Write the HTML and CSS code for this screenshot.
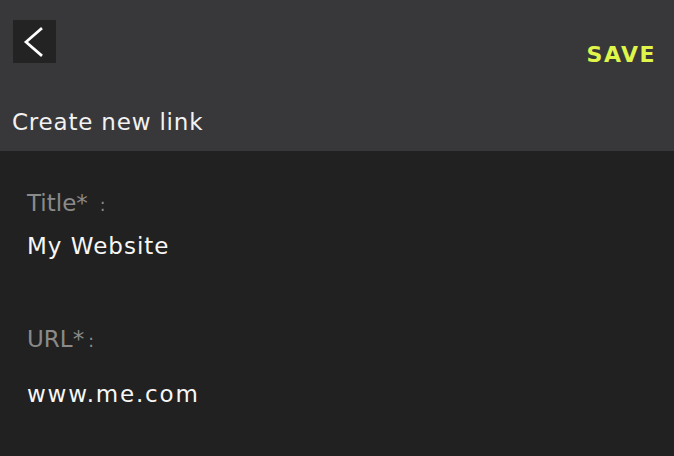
FILE: index.html
```html
<!DOCTYPE html>
<html lang="en">
<head>
<meta charset="utf-8">
<title>Create new link</title>
<link rel="stylesheet" href="styles.css">
</head>
<body>
<div class="app">
  <header class="header">
    <div class="topbar">
      <button class="back" aria-label="Back">
        <svg width="43" height="43" viewBox="0 0 43 43"><path d="M28 9 L13 22 L28 35" fill="none" stroke="#fff" stroke-width="2.7" stroke-linecap="square" stroke-linejoin="miter"/></svg>
      </button>
      <button class="save">SAVE</button>
    </div>
    <h1 class="title">Create new link</h1>
  </header>
  <main class="form">
    <div class="field">
      <div class="label">Title*<span class="colon colon-title">:</span></div>
      <div class="value">My Website</div>
    </div>
    <div class="field field-url">
      <div class="label">URL*<span class="colon">:</span></div>
      <div class="value value-url">www.me.com</div>
    </div>
  </main>
</div>
</body>
</html>
```

FILE: styles.css
```css
* { box-sizing: border-box; }
html, body { margin: 0; padding: 0; }
body {
  width: 674px;
  height: 456px;
  overflow: hidden;
  background: #212121;
  font-family: "DejaVu Sans", "Noto Sans", sans-serif;
}
.app { display: flex; flex-direction: column; height: 100%; }
.header {
  background: #38383a;
  height: 151px;
  padding: 20px 18px 0 12px;
  display: flex;
  flex-direction: column;
}
.topbar {
  display: flex;
  justify-content: space-between;
  align-items: flex-end;
  padding-left: 1px;
  height: 43px;
}
.back {
  width: 43px;
  height: 43px;
  padding: 0;
  border: none;
  background: #232323;
  display: flex;
}
.save {
  border: none;
  background: none;
  padding: 0;
  margin-bottom: -2px;
  color: #dff54a;
  font-family: inherit;
  font-weight: 700;
  font-size: 22px;
  line-height: 20px;
  letter-spacing: 1.5px;
}
.title {
  margin: 45px 0 0 0;
  color: #f2f2f2;
  font-weight: 400;
  font-size: 23px;
  line-height: 28px;
  letter-spacing: 0.8px;
}
.form { padding: 38px 27px 0 27px; }
.label {
  color: #8a8a8a;
  font-size: 23px;
  line-height: 28px;
}
.value {
  color: #f7f7f7;
  font-size: 23px;
  line-height: 28px;
  margin-top: 13px;
  letter-spacing: 1px;
}
.field-url { margin-top: 65px; }
.colon { margin-left: 4px; font-size: 17px; }
.colon-title { margin-left: 12px; }
.value-url { margin-top: 25px; letter-spacing: 1.8px; }
```
